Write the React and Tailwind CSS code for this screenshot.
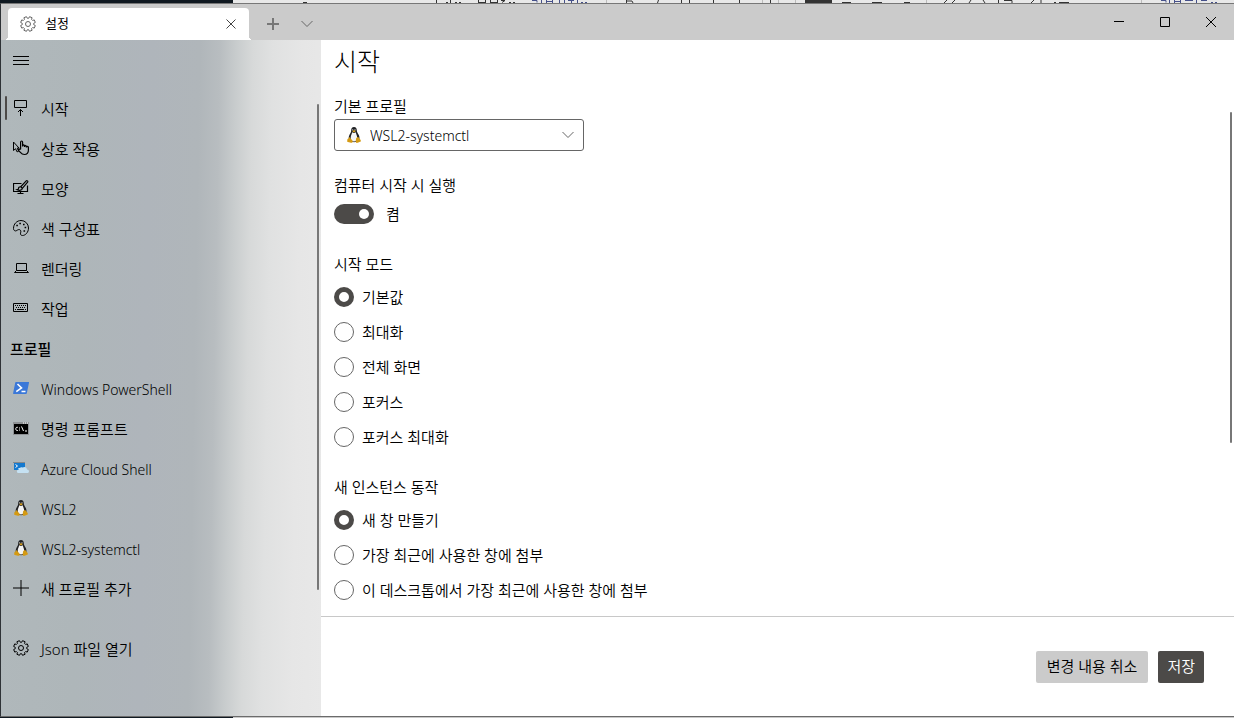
import { useState } from 'react';

const GEAR_POINTS = Array.from({ length: 8 }, (_, k) =>
  [[7.5, 12], [7.5, 33], [5.8, 38], [5.8, 52]].map(([r, d]) => {
    const a = ((k * 45 + d) * Math.PI) / 180;
    return `${(8 + r * Math.cos(a)).toFixed(2)},${(8 + r * Math.sin(a)).toFixed(2)}`;
  }).join(' ')
).join(' ');

const Icon = ({ children }) => (
  <svg width="16" height="16" viewBox="0 0 16 16" fill="none" stroke="currentColor" className="shrink-0" aria-hidden="true">
    {children}
  </svg>
);

const Gear = () => (
  <Icon>
    <polygon points={GEAR_POINTS} strokeLinejoin="round" />
    <circle cx="8" cy="8" r="2.5" />
  </Icon>
);

const Launch = () => (
  <Icon>
    <path d="M1.5 .5h12v7h-12zM7.5 16V9.5M5 12l2.5-2.5L10 12" />
  </Icon>
);

const Interaction = () => (
  <Icon>
    <path d="M6.2 8.2L.5 2v8.5l2-1.800 1.600 3.200 1.600-.8-1.500-3z" />
    <path d="M7.600 9V2.200c0-1.600 2-1.600 2 0v4.300-1c0-1 1.900-1 1.900.2v1.200-.7c0-1 1.900-1 1.900.2v1-.4c0-1 2-.9 2 .3v3c0 2.500-1.600 4.200-4 4.200-2 0-3-.9-4-2.200L5.500 10.500c-.6-1 .6-1.900 1.300-1.100z" strokeWidth="1.200" />
  </Icon>
);

const Appearance = () => (
  <Icon>
    <path d="M8.500 3.500h-8v8h14v-6M7.500 11.500v2M4.500 13.500h6" strokeWidth="1.200" />
    <path d="M13.200 .9c.8-.7 2 .3 1.400 1.200L9.300 8.300 7.700 6.800zM7.700 6.800c-1.400-.2-2.200.6-2.300 2-.1.600-.5.800-1.200.9 2.500 1.100 4.800.6 5.100-1.400" strokeWidth="1.200" />
  </Icon>
);

const Palette = () => (
  <Icon>
    <path d="M8 .5a7.500 7.500 0 0 1 7.500 7.500c0 4.200-3 7.500-6 7.500-1.800 0-2.300-1.300-1.900-2.600.5-1.500.3-2.700-.9-3.200-1-.4-1.900.1-2.900.8C2.200 11.600.5 10.500.5 8.500.5 4 3.800.5 8 .5z" />
    <path d="M3.300 5.500h1.600M6.300 3.500h1.600M10 4.500h1.600M11.600 7.500h1.600M10.500 11h1.600" strokeWidth="1.600" />
  </Icon>
);

const Laptop = () => (
  <Icon>
    <path d="M3.500 3.500h10v7h-10zM3.500 10.500l-2 2h14l-2-2" />
  </Icon>
);

const Keyboard = () => (
  <Icon>
    <path d="M.5 3.500h14v8H.5z" />
    <path d="M2 5.500h11.500M3 7.500h10" strokeDasharray="1 1" />
    <path d="M2 9.500h1M4 9.500h7M12 9.500h1" />
  </Icon>
);

const Plus = () => (
  <Icon>
    <path d="M8 0v16M0 8h16" />
  </Icon>
);

const Chevron = () => (
  <svg width="12" height="8" viewBox="0 0 12 8" fill="none" stroke="currentColor" aria-hidden="true">
    <path d="M.5 1L6 6.500 11.500 1" />
  </svg>
);

const PowerShell = () => (
  <Icon>
    <path d="M3 2h12.500c.5 0 .6.400.5.700l-2.200 10.600c-.1.500-.4.700-.8.700H.6c-.5 0-.6-.4-.5-.7L2.200 2.700c.1-.5.400-.7.800-.7z" fill="#3b78d8" stroke="none" />
    <path d="M4.500 4l4 3.800L3.300 11.600M8.500 11.500h4" stroke="#fff" strokeWidth="1.600" />
  </Icon>
);

const CommandPrompt = () => (
  <Icon>
    <path d="M0 2h16v13H0z" fill="#8f9295" stroke="none" />
    <path d="M1 4h14v10H1z" fill="#000" stroke="none" />
    <path d="M10 3h1M12 3h1M14 3h1" stroke="#fff" />
    <path d="M4.800 7.300c-2.700-.8-2.700 3.900 0 3.200M6.500 7.500v1M6.500 9.500v1M8.500 6.500l2 4.500M12 11h2" stroke="#fff" />
  </Icon>
);

const CloudShell = () => (
  <Icon>
    <path d="M1 3h11v7H1z" fill="#1479cf" stroke="none" />
    <path d="M0 2.500h12" stroke="#85898c" />
    <path d="M2.500 4.500l2 1.500-2 1.500M5.500 8.500H8" stroke="#fff" />
    <path d="M5.500 13c-2.200 0-2.200-3.200.2-3.400.4-2 2.300-2.900 3.900-2.100 2.200-1.500 4.400 0 4.400 2.100 2.600 0 2.600 3.400.3 3.400z" fill="#c5e1f2" stroke="none" />
  </Icon>
);

const Tux = () => (
  <Icon>
    <g stroke="none">
      <path d="M8 0c2 0 2.800 1.300 2.800 3.200 0 2 .9 2.700 2 4.700.9 1.800.9 4.200 0 6L8 15.200 3.200 13.800c-.8-2-.7-4 .2-5.900.9-1.700 1.800-2.600 1.800-4.700C5.200 1.300 6 0 8 0z" fill="#202124" />
      <path d="M6.200 5.300c1.200.8 2.400.8 3.500 0 .4 1.900 1.500 3.200 1.500 5.700 0 2.200-1.300 3.500-3.200 3.500S4.700 13.200 4.700 11c0-2.500 1.200-3.800 1.500-5.700z" fill="#f4f4f4" />
      <path d="M6.200 2.200h1v1.300h-1zM8.500 2.200h1v1.300h-1z" fill="#d4d4d4" />
      <path d="M6.200 4.100L8 3.200l1.900.9L8 5.400z" fill="#e0a61b" />
      <path d="M3.400 9.900l3 3.500c.8 1.300.1 2.600-1.400 2.400L1.900 15c-.8-.2-.9-.6-.6-1.400.2-.7-.1-1.600.6-1.800.9-.2.9-1.100 1.500-1.900zM12.400 9.900c.5.900.9 1.500 1.500 2 .7.500.5 1 .9 1.600.3.700 0 1-.7 1.200l-2.400 1.100c-1.300.5-2.100-.2-2-1.500l.5-3.200c.3-.9 1.500-.3 2.200-1.200z" fill="#d49a13" />
    </g>
  </Icon>
);

const settingsPages = [
  { label: '시작', icon: Launch },
  { label: '상호 작용', icon: Interaction },
  { label: '모양', icon: Appearance },
  { label: '색 구성표', icon: Palette },
  { label: '렌더링', icon: Laptop },
  { label: '작업', icon: Keyboard }
];

const profiles = [
  { label: 'Windows PowerShell', icon: PowerShell },
  { label: '명령 프롬프트', icon: CommandPrompt },
  { label: 'Azure Cloud Shell', icon: CloudShell },
  { label: 'WSL2', icon: Tux },
  { label: 'WSL2-systemctl', icon: Tux },
  { label: '새 프로필 추가', icon: Plus }
];

const launchModes = ['기본값', '최대화', '전체 화면', '포커스', '포커스 최대화'];

const instanceModes = [
  '새 창 만들기',
  '가장 최근에 사용한 창에 첨부',
  '이 데스크톱에서 가장 최근에 사용한 창에 첨부'
];

const NavItem = ({ item, active, onSelect }) => {
  const ItemIcon = item.icon;
  const hangul = /[가-힣]/.test(item.label);
  return (
    <li>
      <button
        onClick={() => onSelect(item.label)}
        className={`relative flex h-10 w-full items-center gap-3 pl-3 text-left ${hangul ? 'text-[15px]' : 'text-[14px]'}`}
      >
        {active && <span className="absolute left-1 top-2 h-6 w-[2px] rounded-full bg-[#4c4a48]" />}
        <ItemIcon />
        <span className="pt-[2px]">{item.label}</span>
      </button>
    </li>
  );
};

const RadioGroup = ({ name, title, options }) => {
  const [value, setValue] = useState(options[0]);
  return (
    <fieldset>
      <legend className="h-5 leading-5">{title}</legend>
      <div className="mt-[7px] flex flex-col gap-[3px]">
        {options.map(option => (
          <label key={option} className="flex h-8 items-center gap-2">
            <input
              type="radio"
              name={name}
              checked={value === option}
              onChange={() => setValue(option)}
              className="h-5 w-5 shrink-0 appearance-none rounded-full border border-[#666] bg-white checked:border-[5px] checked:border-[#4c4a48]"
            />
            {option}
          </label>
        ))}
      </div>
    </fieldset>
  );
};

// Sliver of the document window that shows above the terminal
const BackdropStrip = () => (
  <div className="flex h-[3px] shrink-0">
    <div className="w-[233px] bg-[#101921]" />
    <div className="flex-1 overflow-hidden bg-[#e8e8e8]">
      <svg width="1001" height="3" viewBox="233 0 1001 3" stroke="#333" fill="none" aria-hidden="true">
        <path d="M436.500 0v3M450.500 0v3M446 2.500h2M455 2.500h2M459 2.500h2M303 2.500h4" />
        <path d="M478.500 0v3M485.500 0v3M478 2.500h8M490.500 0v3M497.500 0v3M490 2.500h8M501 .5h4l-3 2M509 2.500h2M513 2.500h2" />
        <path d="M532 .5h5v2M541.500 0v3M546.500 0v3M552.500 0v3M546 1.500h6M559.500 0v3M564.500 0v3M568 .5h6M571.500 0v3M577.500 0v3M581 2.500h2M585 2.500h2" stroke="#45508a" />
        <path d="M626 1h6l1 2M626.500 0v3M658.500 0l-1 3M681.500 0v3M689.500 0v3M713.500 0v3M739.500 0v3M770.500 0v3" />
        <path d="M606.500 0v3M762.500 0v3M778.500 0v3M795.500 0v3M926.500 0v3M1141.500 0v3" stroke="#bbb" />
        <path d="M805 1.500h27" strokeWidth="3" />
        <path d="M842 2.500h9M872 2.500h10M904 2.500h6M905 2.500h5M947 0l-3 3M955 0l-3 3M971 0l-2 3M983 0l2 3M998.500 0v3M1004 .5h8v3M1034 0l-3 3M1041 0v3M1054 2.500h2M1059 2.500h10" />
        <path d="M1161 .5h5v2M1169.500 0v3M1174.500 0v3M1180.500 0v3M1174 1.500h6M1185 .5h8M1196.500 0v3M1201 .5h6M1211 2.500h2M1215 2.500h2" stroke="#45508a" />
      </svg>
    </div>
  </div>
);

const TitleBar = () => (
  <header className="flex h-9 shrink-0 bg-[#cbcbcb]">
    <div className="relative ml-[7px] mt-1 flex h-8 w-[241px] items-center rounded-t bg-white pl-3 pr-1">
      <span className="absolute -left-1 bottom-0 h-1 w-1 bg-[radial-gradient(circle_at_0_0,transparent_4px,white_4px)]" />
      <span className="absolute -right-1 bottom-0 h-1 w-1 bg-[radial-gradient(circle_at_100%_0,transparent_4px,white_4px)]" />
      <span className="text-[#666]"><Gear /></span>
      <span className="ml-[9px] flex-1 text-[13px] font-normal">설정</span>
      <button aria-label="탭 닫기" className="flex h-7 w-7 items-center justify-center text-[#444]">
        <svg width="10" height="10" viewBox="0 0 10 10" stroke="currentColor" aria-hidden="true">
          <path d="M.5 .5l9 9M9.500 .5l-9 9" />
        </svg>
      </button>
    </div>
    <button aria-label="새 탭" className="ml-2 mt-1 flex h-8 w-8 items-center justify-center text-[#777]">
      <svg width="12" height="12" viewBox="0 0 12 12" stroke="currentColor" aria-hidden="true">
        <path d="M6 0v12M0 6h12" strokeWidth="2" />
      </svg>
    </button>
    <button aria-label="새 탭 메뉴" className="mt-1 flex h-8 w-9 items-center justify-center text-[#666]">
      <Chevron />
    </button>
    <div className="ml-auto flex h-9">
      <button aria-label="최소화" className="flex w-[46px] items-center justify-center">
        <svg width="10" height="10" viewBox="0 0 10 10" stroke="#000" aria-hidden="true"><path d="M0 4.500h10" /></svg>
      </button>
      <button aria-label="최대화" className="flex w-[46px] items-center justify-center">
        <svg width="10" height="10" viewBox="0 0 10 10" stroke="#000" fill="none" aria-hidden="true"><path d="M.5 .5h9v9h-9z" /></svg>
      </button>
      <button aria-label="닫기" className="flex w-[46px] items-center justify-center">
        <svg width="10" height="10" viewBox="0 0 10 10" stroke="#000" aria-hidden="true"><path d="M0 0l10 10M10 0L0 10" /></svg>
      </button>
    </div>
  </header>
);

const App = () => {
  const [page, setPage] = useState('시작');

  return (
    <div className="flex h-screen flex-col overflow-hidden bg-[#101921] font-['Noto_Sans','Noto_Sans_CJK_KR',sans-serif] font-[350] text-black">
      <BackdropStrip />

      <div className="flex min-h-0 flex-1 flex-col border-b border-l border-t border-b-[#6b6b6b] border-l-[#2e3236] border-t-[#777] bg-white">
        <TitleBar />

        <div className="flex min-h-0 flex-1">
          <nav className="relative w-80 shrink-0 bg-[linear-gradient(91deg,#b0b8bb_0%,#aeb6b9_25%,#afb5bb_45%,#b0b6ba_60%,#b8bdc0_66%,#c8cccd_71%,#d7d9d9_76%,#e0e1e1_82%,#e6e6e6_91%,#e8e8e8_100%)]">
            <button aria-label="탐색 메뉴" className="flex h-10 w-10 items-center justify-center">
              <Icon><path d="M0 4.500h16M0 8.500h16M0 12.500h16" /></Icon>
            </button>
            <ul className="mt-2">
              {settingsPages.map(item => (
                <NavItem key={item.label} item={item} active={page === item.label} onSelect={setPage} />
              ))}
            </ul>
            <h2 className="flex h-10 items-center pl-[9px] pt-[2px] text-[15px] font-medium">프로필</h2>
            <ul>
              {profiles.map(item => (
                <NavItem key={item.label} item={item} active={page === item.label} onSelect={setPage} />
              ))}
            </ul>
            <ul className="mt-5">
              <NavItem item={{ label: 'Json 파일 열기', icon: Gear }} onSelect={setPage} />
            </ul>
            <span className="absolute right-[2px] top-16 h-[486px] w-[2px] rounded-full bg-[#777]" />
          </nav>

          <main className="relative flex min-w-0 flex-1 flex-col bg-white text-[15px]">
            <div className="min-h-0 flex-1 overflow-hidden px-[13px]">
              <h1 className="mb-[14px] text-[25px] font-light leading-[42px]">시작</h1>

              <div className="flex flex-col gap-6">
                <div>
                  <label htmlFor="default-profile" className="block h-5 leading-5">기본 프로필</label>
                  <div className="relative mt-[3px] w-[250px]">
                    <span className="pointer-events-none absolute left-3 top-2"><Tux /></span>
                    <select
                      id="default-profile"
                      defaultValue="WSL2-systemctl"
                      className="h-8 w-full appearance-none rounded-[3px] border border-[#666] bg-transparent pl-[35px] pr-8 text-[14px]"
                    >
                      <option>Windows PowerShell</option>
                      <option>명령 프롬프트</option>
                      <option>Azure Cloud Shell</option>
                      <option>WSL2</option>
                      <option>WSL2-systemctl</option>
                    </select>
                    <span className="pointer-events-none absolute right-[10px] top-3 text-[#666]"><Chevron /></span>
                  </div>
                </div>

                <div>
                  <label htmlFor="launch-startup" className="block h-5 leading-5">컴퓨터 시작 시 실행</label>
                  <div className="mt-[3px] flex h-8 items-center gap-3">
                    <input
                      id="launch-startup"
                      type="checkbox"
                      role="switch"
                      defaultChecked
                      className="flex h-5 w-10 appearance-none items-center rounded-full bg-[#999] px-[5px] after:h-[10px] after:w-[10px] after:rounded-full after:bg-white after:content-[''] checked:justify-end checked:bg-[#4c4a48]"
                    />
                    <span>켬</span>
                  </div>
                </div>

                <RadioGroup name="launch-mode" title="시작 모드" options={launchModes} />
                <RadioGroup name="instance-mode" title="새 인스턴스 동작" options={instanceModes} />
              </div>
            </div>
            <span className="absolute right-[2px] top-[72px] h-[331px] w-[2px] rounded-full bg-[#777]" />

            <footer className="flex h-[100px] shrink-0 items-center justify-end gap-[10px] border-t border-[#c8c8c8] pr-[30px]">
              <button className="h-8 rounded-[2px] bg-[#cbcbcb] px-[11px]">변경 내용 취소</button>
              <button className="h-8 rounded-[2px] bg-[#4c4a48] px-[9px] text-white">저장</button>
            </footer>
          </main>
        </div>
      </div>

      <div className="flex h-px shrink-0">
        <div className="w-[233px] bg-[#101921]" />
        <div className="flex-1 bg-[#c9c9c9]" />
      </div>
    </div>
  );
};

export default App;
